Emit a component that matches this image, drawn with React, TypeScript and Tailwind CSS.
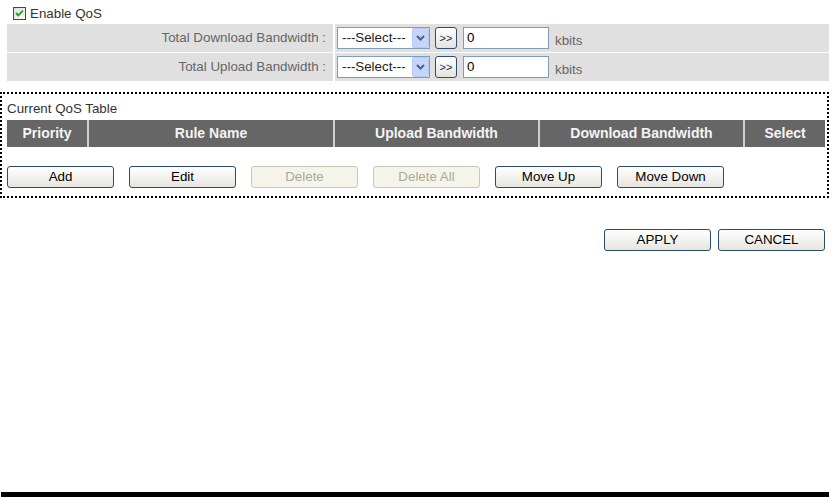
const font = "font-['Liberation_Sans',Arial,sans-serif]";

const COLUMNS = [
  { label: "Priority", width: "w-[80px]" },
  { label: "Rule Name", width: "w-[244px]" },
  { label: "Upload Bandwidth", width: "w-[203px]" },
  { label: "Download Bandwidth", width: "w-[203px]" },
  { label: "Select", width: "w-[80px]" },
];

export default function App() {
  return (
    <div className={`flex h-[497px] w-[832px] flex-col bg-white ${font}`}>
      <label className="ml-[13px] mt-[7px] flex h-[13px] items-center gap-[4px] text-[13.33px] leading-[13px] text-[#333]">
        <Checkbox />
        <span className="-mt-[1px]">Enable QoS</span>
      </label>

      <div className="ml-[7px] mt-[4px] flex w-[822px] flex-col gap-[1px]">
        <BandwidthRow label="Total Download Bandwidth :" />
        <BandwidthRow label="Total Upload Bandwidth :" />
      </div>

      <section className="mt-[11px] w-[829px] border-2 border-dotted border-black pb-[8px] pl-[5px] pr-[2px] pt-[7px]">
        <h2 className="text-[13.33px] leading-[16px] text-[#333]">Current QoS Table</h2>
        <div className="mt-[3px] flex h-[27px] gap-[2px] bg-[#cfcfcf]">
          {COLUMNS.map((col) => (
            <div
              key={col.label}
              className={`${col.width} flex items-center justify-center bg-[#666] text-[14px] font-bold text-[#f4f4f4]`}
            >
              {col.label}
            </div>
          ))}
        </div>
        <div className="mt-[19px] flex gap-[15px]">
          <XpButton label="Add" />
          <XpButton label="Edit" />
          <XpButton label="Delete" disabled />
          <XpButton label="Delete All" disabled />
          <XpButton label="Move Up" />
          <XpButton label="Move Down" />
        </div>
      </section>

      <div className="mt-[31px] flex justify-end gap-[7px] pr-[7px]">
        <XpButton label="APPLY" />
        <XpButton label="CANCEL" />
      </div>

      <div className="ml-[1px] mt-auto h-[5px] w-[828px] bg-black" />
    </div>
  );
}

function BandwidthRow({ label }: { label: string }) {
  return (
    <div className="flex h-[28px] gap-[2px]">
      <div className="flex w-[326px] items-center justify-end bg-[#e0e0e0] pr-[7px] text-[13.33px] text-[#666]">
        {label}
      </div>
      <div className="flex flex-1 items-center bg-[#e0e0e0] pl-[2px]">
        <div className="flex h-[22px] w-[93px] items-stretch border border-[#7f9db9] bg-white">
          <span className="flex flex-1 items-center pl-[4px] text-[13.33px] text-[#222]">---Select---</span>
          <span className="flex w-[17px] items-center justify-center rounded-[2px] border border-[#b7c9f5] bg-[#c4d4fb]">
            <svg width="9" height="6" viewBox="0 0 9 6">
              <polyline points="1,1 4.5,4.5 8,1" fill="none" stroke="#4d6185" strokeWidth="2" />
            </svg>
          </span>
        </div>
        <button
          type="button"
          className="ml-[5px] flex h-[22px] w-[22px] items-center justify-center rounded-[3px] border border-[#2f4f6f] bg-gradient-to-b from-white to-[#e4e4dc] text-[11px] leading-none text-[#1e1e5a]"
        >
          &gt;&gt;
        </button>
        <div className="ml-[6px] flex h-[22px] w-[86px] items-center border border-[#7f9db9] bg-white pl-[3px] text-[13.33px] text-black">
          0
        </div>
        <span className="ml-[6px] mt-[5px] text-[13.33px] text-[#666]">kbits</span>
      </div>
    </div>
  );
}

function XpButton({ label, disabled }: { label: string; disabled?: boolean }) {
  return (
    <button
      type="button"
      disabled={disabled}
      className={`h-[22px] w-[107px] rounded-[3px] border text-[13.33px] leading-none ${
        disabled
          ? "border-[#c9c7ba] bg-[#f5f4ea] text-[#aca899]"
          : "border-[#2a4c70] bg-gradient-to-b from-white to-[#e6e5df] text-black"
      }`}
    >
      {label}
    </button>
  );
}

function Checkbox() {
  return (
    <svg width="13" height="13" viewBox="0 0 13 13" className="shrink-0">
      <defs>
        <linearGradient id="cb" x1="0" y1="0" x2="1" y2="1">
          <stop offset="0" stopColor="#dcdcd7" />
          <stop offset="1" stopColor="#ffffff" />
        </linearGradient>
      </defs>
      <rect x="0.5" y="0.5" width="12" height="12" fill="url(#cb)" stroke="#1c5180" />
      <polyline points="3,6 5.2,8.4 10,3.6" fill="none" stroke="#21a121" strokeWidth="1.9" />
    </svg>
  );
}
